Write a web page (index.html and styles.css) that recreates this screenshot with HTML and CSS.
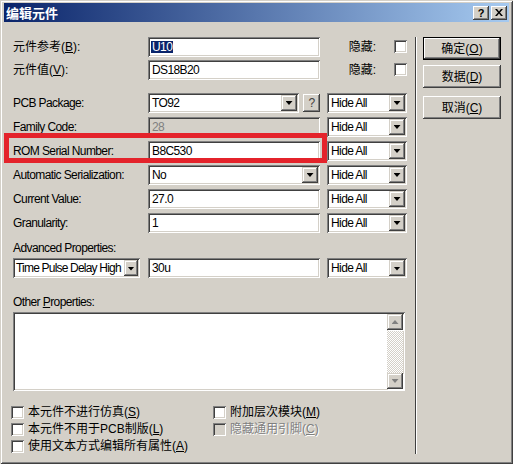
FILE: index.html
```html
<!DOCTYPE html>
<html lang="zh-CN">
<head>
  <meta charset="UTF-8" />
  <meta name="viewport" content="width=device-width, initial-scale=1.0"/>
  <title>编辑元件</title>
  <link rel="stylesheet" href="styles.css">
</head>
<body>
<div class="dialog">
  <div class="titlebar">
    <span class="title">编辑元件</span>
    <div class="caption-btns">
      <span class="cap-btn help">?</span>
      <span class="cap-btn">
        <svg width="8" height="7" viewBox="0 0 8 7"><path d="M0 0h2l2 2.4L6 0h2L5 3.5 8 7H6L4 4.6 2 7H0l3-3.5z"/></svg>
      </span>
    </div>
  </div>

  <div class="client">
    <div class="form">
      <!-- 元件参考 / 元件值 -->
      <div class="row first">
        <span class="lbl zh">元件参考(<u>B</u>):</span>
        <div class="edit"><span class="sel">U10</span></div>
        <div class="hide-cell"><span class="zh">隐藏:</span><span class="check"></span></div>
      </div>
      <div class="row">
        <span class="lbl zh">元件值(<u>V</u>):</span>
        <div class="edit">DS18B20</div>
        <div class="hide-cell"><span class="zh">隐藏:</span><span class="check"></span></div>
      </div>

      <!-- 属性 -->
      <div class="props">
        <div class="row">
          <span class="lbl">PCB Package:</span>
          <div class="pair">
            <div class="combo pkg"><span class="val">TO92</span><span class="drop"></span></div>
            <span class="qbtn">?</span>
          </div>
          <div class="combo"><span class="val">Hide All</span><span class="drop"></span></div>
        </div>
        <div class="row">
          <span class="lbl">Family Code:</span>
          <div class="edit off">28</div>
          <div class="combo"><span class="val">Hide All</span><span class="drop"></span></div>
        </div>
        <div class="row">
          <span class="lbl">ROM Serial Number:</span>
          <div class="edit">B8C530</div>
          <div class="combo"><span class="val">Hide All</span><span class="drop"></span></div>
        </div>
        <div class="row">
          <span class="lbl">Automatic Serialization:</span>
          <div class="combo"><span class="val">No</span><span class="drop"></span></div>
          <div class="combo"><span class="val">Hide All</span><span class="drop"></span></div>
        </div>
        <div class="row">
          <span class="lbl">Current Value:</span>
          <div class="edit">27.0</div>
          <div class="combo"><span class="val">Hide All</span><span class="drop"></span></div>
        </div>
        <div class="row">
          <span class="lbl">Granularity:</span>
          <div class="edit">1</div>
          <div class="combo"><span class="val">Hide All</span><span class="drop"></span></div>
        </div>
      </div>

      <div class="caption adv">Advanced Properties:</div>
      <div class="row">
        <div class="combo adv-combo"><span class="val">Time Pulse Delay High</span><span class="drop"></span></div>
        <div class="edit">30u</div>
        <div class="combo"><span class="val">Hide All</span><span class="drop"></span></div>
      </div>

      <div class="caption other">Other <u>P</u>roperties:</div>
      <div class="memo">
        <div class="memo-text"></div>
        <div class="vscroll">
          <span class="sbtn"><i class="tri up"></i></span>
          <span class="track"></span>
          <span class="sbtn"><i class="tri"></i></span>
        </div>
      </div>

      <div class="options">
        <label class="opt"><span class="check"></span><span class="zh">本元件不进行仿真(<u>S</u>)</span></label>
        <label class="opt"><span class="check"></span><span class="zh">附加层次模块(<u>M</u>)</span></label>
        <label class="opt"><span class="check"></span><span class="zh">本元件不用于PCB制版(<u>L</u>)</span></label>
        <label class="opt disabled"><span class="check"></span><span class="zh">隐藏通用引脚(<u>C</u>)</span></label>
        <label class="opt"><span class="check"></span><span class="zh">使用文本方式编辑所有属性(<u>A</u>)</span></label>
      </div>
    </div>

    <div class="separator"></div>

    <div class="actions">
      <span class="btn default zh">确定(<u>O</u>)</span>
      <span class="btn zh">数据(<u>D</u>)</span>
      <span class="btn zh cancel">取消(<u>C</u>)</span>
    </div>
  </div>

  <!-- 红框标注 -->
  <div class="mark"></div>
</div>
</body>
</html>
```

FILE: styles.css
```css
* {
  box-sizing: border-box;
}
body {
  margin: 0;
  background: #d4d0c8;
  font-family: "Liberation Sans", "Noto Sans CJK SC", sans-serif;
  font-size: 12px;
  letter-spacing: -0.6px;
  color: #000;
}
u {
  text-decoration: underline;
  text-underline-offset: 1px;
}
.zh {
  font-size: 12px;
  letter-spacing: 0;
}

/* window frame */
.dialog {
  position: relative;
  width: 513px;
  height: 464px;
  padding: 3px 4px 4px;
  background: #d4d0c8;
  box-shadow: inset 1px 1px #d4d0c8, inset -1px -1px #404040,
              inset 2px 2px #fff, inset -2px -2px #808080;
  display: flex;
  flex-direction: column;
}
.titlebar {
  height: 19px;
  display: flex;
  align-items: center;
  justify-content: space-between;
  padding: 0 2px;
  background: linear-gradient(to right, #0a246a, #a6caf0);
}
.title {
  color: #fff;
  font-family: "Noto Sans CJK SC", sans-serif;
  font-weight: bold;
  font-size: 13px;
  letter-spacing: 0;
  line-height: 19px;
}
.caption-btns {
  display: flex;
  gap: 2px;
}
.cap-btn {
  width: 16px;
  height: 14px;
  display: flex;
  align-items: center;
  justify-content: center;
  background: #d4d0c8;
  box-shadow: inset -1px -1px #404040, inset 1px 1px #fff,
              inset -2px -2px #808080, inset 2px 2px #d4d0c8;
}
.cap-btn.help {
  font-weight: bold;
  font-size: 11px;
  letter-spacing: 0;
  line-height: 14px;
}

/* client area */
.client {
  flex: 1;
  display: flex;
}
.form {
  width: 394px;
  margin-left: 9px;
  padding-top: 14px;
  display: flex;
  flex-direction: column;
}
.row {
  display: grid;
  grid-template-columns: 135px 172px 87px;
  height: 20px;
  flex: none;
  align-items: center;
}
.row > :last-child {
  margin-left: 7px;
}
.row.first {
  margin-bottom: 3px;
}
.lbl {
  white-space: nowrap;
  line-height: 20px;
  padding-top: 1px;
}
.props {
  margin-top: 13px;
  display: flex;
  flex-direction: column;
  gap: 4px;
}
.hide-cell {
  display: flex;
  align-items: center;
  justify-content: flex-end;
  gap: 18px;
  line-height: 14px;
}

/* sunken fields */
.edit,
.combo,
.memo,
.check {
  background: #fff;
  box-shadow: inset 1px 1px #808080, inset -1px -1px #fff,
              inset 2px 2px #404040, inset -2px -2px #d4d0c8;
}
.edit {
  height: 20px;
  padding: 2px 4px;
  line-height: 16px;
  white-space: nowrap;
  overflow: hidden;
}
.edit.off {
  background: #d4d0c8;
  color: #808080;
}
.sel {
  display: inline-block;
  background: #0a246a;
  color: #fff;
  line-height: 12px;
  margin-left: -1px;
  padding: 0 1px;
}
.combo {
  height: 20px;
  display: flex;
  align-items: center;
  padding: 2px;
}
.combo .val {
  flex: 1;
  padding-left: 2px;
  line-height: 16px;
  white-space: nowrap;
  overflow: hidden;
}
.drop,
.sbtn {
  width: 16px;
  height: 16px;
  flex: none;
  display: flex;
  align-items: center;
  justify-content: center;
  background: #d4d0c8;
  box-shadow: inset -1px -1px #404040, inset 1px 1px #d4d0c8,
              inset -2px -2px #808080, inset 2px 2px #fff;
}
.drop::after {
  content: "";
  width: 7px;
  height: 4px;
  margin-top: 1px;
  background: #000;
  clip-path: polygon(0 0, 100% 0, 50% 100%);
}
.pair {
  display: flex;
  align-items: center;
  gap: 4px;
}
.combo.pkg {
  width: 151px;
}
.qbtn {
  width: 17px;
  height: 18px;
  flex: none;
  display: flex;
  align-items: center;
  justify-content: center;
  color: #404040;
  line-height: 18px;
  background: #d4d0c8;
  box-shadow: inset -1px -1px #404040, inset 1px 1px #fff,
              inset -2px -2px #808080, inset 2px 2px #d4d0c8;
}
.combo.adv-combo {
  width: 127px;
}
.adv-combo .val {
  padding-left: 1px;
  letter-spacing: -0.8px;
}
.adv-combo .drop {
  width: 14px;
}

.caption {
  line-height: 14px;
  flex: none;
}
.caption.adv {
  margin-top: 9px;
  margin-bottom: 3px;
}
.caption.other {
  margin-top: 17px;
  margin-bottom: 3px;
}

/* Other Properties memo */
.memo {
  width: 392px;
  height: 79px;
  flex: none;
  padding: 2px;
  display: flex;
}
.memo-text {
  flex: 1;
}
.vscroll {
  width: 16px;
  display: flex;
  flex-direction: column;
}
.track {
  flex: 1;
  background: repeating-conic-gradient(#fff 0 25%, #d4d0c8 0 50%) 0 0 / 2px 2px;
}
.sbtn {
  filter: drop-shadow(1px 1px 0 #fff);
}
.tri {
  width: 7px;
  height: 4px;
  background: #808080;
  clip-path: polygon(0 0, 100% 0, 50% 100%);
}
.tri.up {
  clip-path: polygon(50% 0, 100% 100%, 0 100%);
}

/* check boxes */
.check {
  width: 13px;
  height: 13px;
  flex: none;
}
.options {
  display: grid;
  grid-template-columns: 202px auto;
  row-gap: 4px;
  margin: 15px 0 0 -2px;
}
.opt {
  display: flex;
  align-items: center;
  gap: 4px;
  height: 13px;
  line-height: 13px;
  white-space: nowrap;
}
.opt.disabled {
  color: #808080;
  text-shadow: 1px 1px #fff;
}
.opt.disabled .check {
  background: #d4d0c8;
}

/* right column */
.separator {
  width: 2px;
  margin: 15px 0 6px 8px;
  border-left: 1px solid #404040;
  border-right: 1px solid #fff;
}
.actions {
  width: 78px;
  margin-left: 6px;
  padding-top: 15px;
  display: flex;
  flex-direction: column;
  gap: 5px;
}
.btn {
  height: 23px;
  display: flex;
  align-items: center;
  justify-content: center;
  line-height: 14px;
  background: #d4d0c8;
  box-shadow: inset -1px -1px #404040, inset 1px 1px #fff,
              inset -2px -2px #808080, inset 2px 2px #d4d0c8;
}
.btn.default {
  border: 1px solid #000;
}
.btn.cancel {
  margin-top: 3px;
}

/* red note box */
.mark {
  position: absolute;
  left: 4px;
  top: 133px;
  width: 323px;
  height: 30px;
  border: 5px solid #e4232b;
}
```
